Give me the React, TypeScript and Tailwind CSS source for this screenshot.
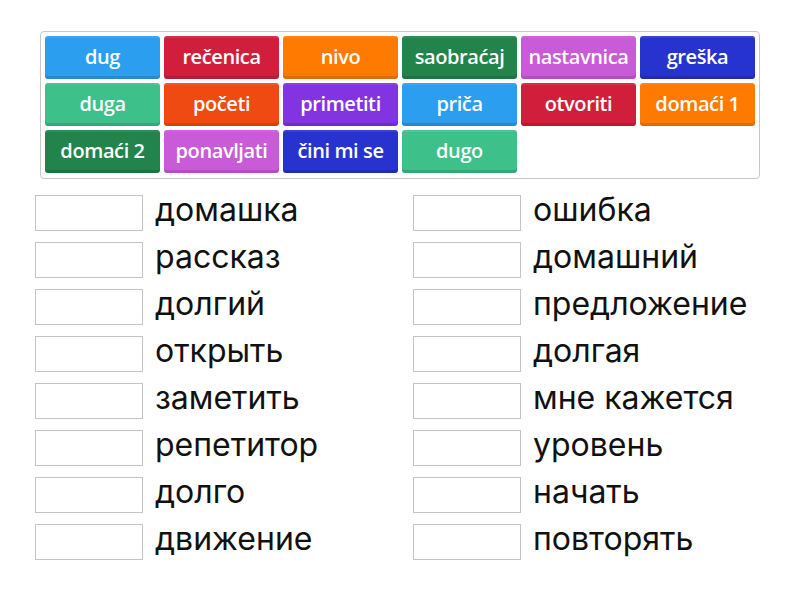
import React from "react";

const tiles: { t: string; c: string }[] = [
  { t: "dug", c: "bg-[#2b9ef0]" },
  { t: "rečenica", c: "bg-[#d11f3b]" },
  { t: "nivo", c: "bg-[#ff7a00]" },
  { t: "saobraćaj", c: "bg-[#23844b]" },
  { t: "nastavnica", c: "bg-[#c95ad8]" },
  { t: "greška", c: "bg-[#2633cf]" },
  { t: "duga", c: "bg-[#3dc089]" },
  { t: "početi", c: "bg-[#ef4a12]" },
  { t: "primetiti", c: "bg-[#8334e2]" },
  { t: "priča", c: "bg-[#2b9ef0]" },
  { t: "otvoriti", c: "bg-[#d11f3b]" },
  { t: "domaći 1", c: "bg-[#ff7a00]" },
  { t: "domaći 2", c: "bg-[#23844b]" },
  { t: "ponavljati", c: "bg-[#c95ad8]" },
  { t: "čini mi se", c: "bg-[#2633cf]" },
  { t: "dugo", c: "bg-[#3dc089]" },
];

const left = ["домашка", "рассказ", "долгий", "открыть", "заметить", "репетитор", "долго", "движение"];
const right = ["ошибка", "домашний", "предложение", "долгая", "мне кажется", "уровень", "начать", "повторять"];

function Row({ w }: { w: string }) {
  return (
    <div className="flex items-center h-[36px] gap-[12px]">
      <div className="w-[108px] h-[36px] border border-[#c4c4c4] bg-white shrink-0" />
      <span className="text-[32px] leading-none text-[#111] font-['Inter',sans-serif] -mt-[6px]">{w}</span>
    </div>
  );
}

export default function App() {
  return (
    <div className="w-[800px] h-[600px] bg-white relative">
      <div className="pt-[31px] pl-[40px]">
        <div className="w-[720px] h-[148px] border border-[#c8c8c8] rounded-[4px] p-[4px] grid grid-cols-[repeat(6,115px)] grid-rows-[repeat(3,43px)] gap-[4px]">
          {tiles.map((x) => (
            <div
              key={x.t}
              className={`${x.c} rounded-[3px] flex items-center justify-center text-white text-[20px] tracking-[-0.4px] font-['Open_Sans',sans-serif] font-semibold shadow-[inset_0_-3px_0_rgba(0,0,0,0.12),inset_0_2px_0_rgba(255,255,255,0.08)] pb-[2px]`}
            >
              {x.t}
            </div>
          ))}
        </div>
      </div>
      <div className="flex pl-[35px] pt-[16px]">
        <div className="w-[378px] flex flex-col gap-[11px]">
          {left.map((w) => (
            <Row key={w} w={w} />
          ))}
        </div>
        <div className="flex flex-col gap-[11px]">
          {right.map((w) => (
            <Row key={w} w={w} />
          ))}
        </div>
      </div>
    </div>
  );
}
